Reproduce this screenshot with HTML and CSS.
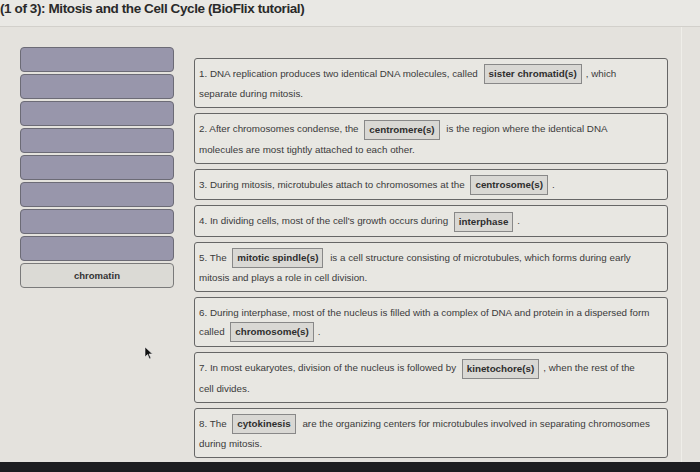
FILE: index.html
```html
<!DOCTYPE html>
<html lang="en">
<head>
<meta charset="UTF-8">
<meta name="viewport" content="width=device-width, initial-scale=1.0">
<title>Mitosis and the Cell Cycle</title>
<link rel="stylesheet" href="styles.css">
</head>
<body>
<div id="screen">
    <h1 class="title">(1 of 3): Mitosis and the Cell Cycle (BioFlix tutorial)</h1>
    <div class="main">
        <div class="bank">
            <div class="bar"></div>
            <div class="bar"></div>
            <div class="bar"></div>
            <div class="bar"></div>
            <div class="bar"></div>
            <div class="bar"></div>
            <div class="bar"></div>
            <div class="bar"></div>
            <div class="bar label">chromatin</div>
        </div>
        <div class="questions">
            <div class="q">1. DNA replication produces two identical DNA molecules, called <span class="chip">sister chromatid(s)</span>, which separate during mitosis.</div>
            <div class="q">2. After chromosomes condense, the <span class="chip">centromere(s)</span> is the region where the identical DNA molecules are most tightly attached to each other.</div>
            <div class="q">3. During mitosis, microtubules attach to chromosomes at the <span class="chip">centrosome(s)</span>.</div>
            <div class="q">4. In dividing cells, most of the cell's growth occurs during <span class="chip">interphase</span>.</div>
            <div class="q">5. The <span class="chip">mitotic spindle(s)</span> is a cell structure consisting of microtubules, which forms during early mitosis and plays a role in cell division.</div>
            <div class="q">6. During interphase, most of the nucleus is filled with a complex of DNA and protein in a dispersed form called <span class="chip">chromosome(s)</span>.</div>
            <div class="q">7. In most eukaryotes, division of the nucleus is followed by <span class="chip">kinetochore(s)</span>, when the rest of the cell divides.</div>
            <div class="q">8. The <span class="chip">cytokinesis</span> are the organizing centers for microtubules involved in separating chromosomes during mitosis.</div>
        </div>
    </div>
    <div class="bezel"></div>
    <svg class="cursor" width="10" height="14" viewBox="0 0 10 14">
        <path d="M1 1 L1 11 L3.5 8.5 L5.5 13 L7 12.3 L5 8 L8.5 8 Z" fill="#111" stroke="#eee" stroke-width="0.6"/>
    </svg>
</div>
</body>
</html>
```

FILE: styles.css
```css
body {
    margin: 0;
    background-color: #e4e2dd;
    font-family: "Liberation Sans", Arial, sans-serif;
    color: #3a3a3a;
}
#screen {
    position: relative;
    width: 700px;
    height: 472px;
    overflow: hidden;
    display: flex;
    flex-direction: column;
}
.title {
    margin: 0;
    height: 27px;
    padding-top: 1px;
    font-size: 13.5px;
    line-height: 15px;
    font-weight: bold;
    color: #2a2a2a;
    letter-spacing: -0.4px;
    border-bottom: 1px solid #d2d0cb;
    box-sizing: border-box;
    background-color: #e9e8e4;
}
.main {
    flex: 1;
    display: flex;
    gap: 20px;
    padding: 20px 0 0 20px;
    border-right: 1px solid #efeee9;
    margin-right: 18px;
}
.bank {
    width: 154px;
    display: flex;
    flex-direction: column;
    gap: 2px;
}
.bar {
    height: 25px;
    box-sizing: border-box;
    background-color: #9896ab;
    border: 1px solid #6c6b76;
    border-radius: 4px;
}
.bar.label {
    background-color: #dbdad5;
    border-color: #7a7a7a;
    text-align: center;
    font-size: 9.5px;
    font-weight: bold;
    line-height: 23px;
    color: #333;
}
.questions {
    width: 474px;
    margin-top: 11px;
    display: flex;
    flex-direction: column;
    gap: 5px;
}
.q {
    border: 1px solid #666;
    border-radius: 3px;
    padding: 5px 15px 4px 4px;
    font-size: 9.8px;
    line-height: 19px;
    background-color: #e8e7e2;
}
.chip {
    display: inline-block;
    margin: 0 4px 0 3px;
    padding: 0 4px;
    height: 18px;
    line-height: 18px;
    vertical-align: middle;
    font-weight: bold;
    color: #2e2e2e;
    background-color: #d9d8d4;
    border: 1px solid #888;
}
.bezel {
    height: 10px;
    background-color: #1d1d20;
}
.cursor {
    position: absolute;
    left: 144px;
    top: 346px;
}
```
